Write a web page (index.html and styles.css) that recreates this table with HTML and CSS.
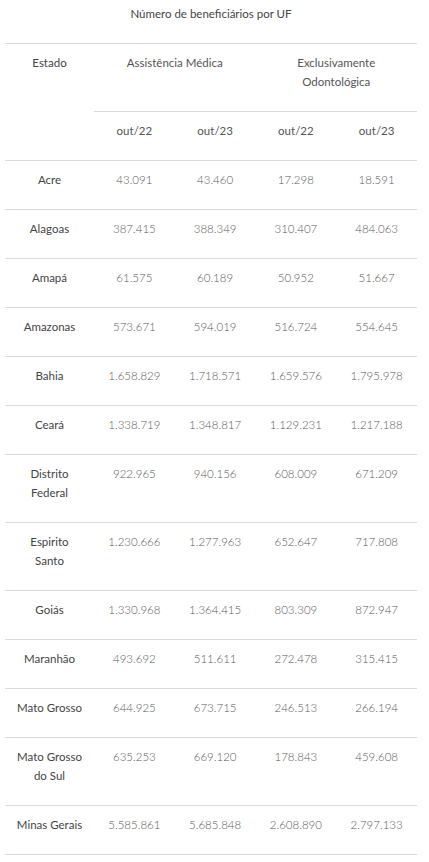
FILE: index.html
```html
<!DOCTYPE html>
<html lang="pt-BR">
  <head>
    <meta charset="UTF-8" />
    <meta name="viewport" content="width=device-width, initial-scale=1.0" />
    <title>Número de beneficiários por UF</title>
    <link rel="stylesheet" href="styles.css">
  </head>
  <body>
    <table class="uf-table">
      <caption>Número de beneficiários por UF</caption>
      <colgroup>
        <col class="col-state" />
        <col /><col /><col /><col />
      </colgroup>
      <thead>
        <tr>
          <th rowspan="2" class="state">Estado</th>
          <th colspan="2">Assistência Médica</th>
          <th colspan="2">Exclusivamente<br />Odontológica</th>
        </tr>
        <tr class="sub">
          <th>out/22</th>
          <th>out/23</th>
          <th>out/22</th>
          <th>out/23</th>
        </tr>
      </thead>
      <tbody>
        <tr><td class="state">Acre</td><td>43.091</td><td>43.460</td><td>17.298</td><td>18.591</td></tr>
        <tr><td class="state">Alagoas</td><td>387.415</td><td>388.349</td><td>310.407</td><td>484.063</td></tr>
        <tr><td class="state">Amapá</td><td>61.575</td><td>60.189</td><td>50.952</td><td>51.667</td></tr>
        <tr><td class="state">Amazonas</td><td>573.671</td><td>594.019</td><td>516.724</td><td>554.645</td></tr>
        <tr><td class="state">Bahia</td><td>1.658.829</td><td>1.718.571</td><td>1.659.576</td><td>1.795.978</td></tr>
        <tr><td class="state">Ceará</td><td>1.338.719</td><td>1.348.817</td><td>1.129.231</td><td>1.217.188</td></tr>
        <tr><td class="state">Distrito<br />Federal</td><td>922.965</td><td>940.156</td><td>608.009</td><td>671.209</td></tr>
        <tr><td class="state">Espirito<br />Santo</td><td>1.230.666</td><td>1.277.963</td><td>652.647</td><td>717.808</td></tr>
        <tr><td class="state">Goiás</td><td>1.330.968</td><td>1.364.415</td><td>803.309</td><td>872.947</td></tr>
        <tr><td class="state">Maranhão</td><td>493.692</td><td>511.611</td><td>272.478</td><td>315.415</td></tr>
        <tr><td class="state">Mato Grosso</td><td>644.925</td><td>673.715</td><td>246.513</td><td>266.194</td></tr>
        <tr><td class="state">Mato Grosso<br />do Sul</td><td>635.253</td><td>669.120</td><td>178.843</td><td>459.608</td></tr>
        <tr><td class="state">Minas Gerais</td><td>5.585.861</td><td>5.685.848</td><td>2.608.890</td><td>2.797.133</td></tr>
      </tbody>
    </table>
  </body>
</html>
```

FILE: styles.css
```css
body {
  margin: 0;
  padding: 0 12px 0 5px;
  background: #fff;
  font-family: Lato, "Open Sans", sans-serif;
  font-size: 11.5px;
  color: #555;
}
.uf-table {
  width: 412px;
  border-collapse: collapse;
  table-layout: fixed;
}
.uf-table caption {
  padding: 6px 0 21px;
  line-height: 16px;
  color: #444;
}
.col-state {
  width: 89px;
}
th,
td {
  padding: 9px 2px 20px;
  line-height: 19px;
  text-align: center;
  vertical-align: top;
  border-bottom: 1px solid #d6dce1;
}
thead tr:first-child th {
  border-top: 1px solid #d6dce1;
}
th {
  font-weight: 400;
  color: #555;
}
td {
  font-weight: 300;
  color: #5a5a5a;
}
td.state,
th.state {
  font-weight: 400;
  color: #444;
}
```
